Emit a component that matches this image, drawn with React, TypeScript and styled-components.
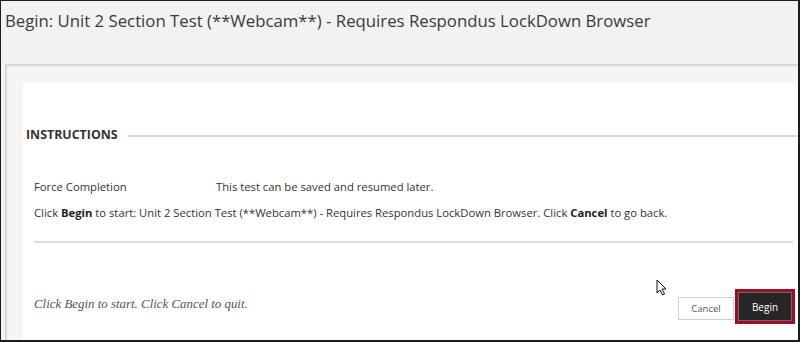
import React from "react";
import styled, { createGlobalStyle } from "styled-components";

const Global = createGlobalStyle`
  html, body { margin: 0; padding: 0; background: #f2f2f2; }
  * { box-sizing: border-box; }
`;

const Frame = styled.div`
  position: relative;
  width: 800px;
  height: 342px;
  border: 1px solid #1c1c1c;
  border-right-width: 2px;
  border-bottom-width: 2px;
  background: #f2f2f2;
  display: flex;
  flex-direction: column;
  font-family: "Open Sans", "Liberation Sans", sans-serif;
  color: #333;
  overflow: hidden;
`;

const Title = styled.h1`
  margin: 0;
  height: 63px;
  padding: 8px 0 0 4px;
  font-size: 16.75px;
  line-height: 24px;
  font-weight: 400;
  color: #3a3a3a;
  white-space: nowrap;
`;

const Panel = styled.div`
  flex: 1;
  display: flex;
  margin-left: 4px;
  border-top: 2px solid #d6d6d6;
  border-left: 2px solid #d6d6d6;
  background: #f5f5f5;
  padding: 17px 0 0 16px;
`;

const Content = styled.div`
  flex: 1;
  background: #fff;
  display: flex;
  flex-direction: column;
`;

const SectionHeader = styled.div`
  display: flex;
  align-items: center;
  gap: 10px;
  margin-top: 44px;
  padding-left: 3px;
`;

const SectionTitle = styled.h2`
  margin: 0;
  font-size: 12.4px;
  line-height: 16px;
  font-weight: 700;
  color: #333;
`;

const Rule = styled.div`
  flex: 1;
  height: 2px;
  background: #dadada;
  margin-top: 2px;
`;

const Body = styled.div`
  display: flex;
  flex-direction: column;
  padding-left: 11px;
  margin-top: 36px;
`;

const InfoRow = styled.div`
  display: flex;
  font-size: 11.25px;
  line-height: 16px;
  color: #333;
  white-space: nowrap;
`;

const Label = styled.span`
  width: 182px;
  flex: none;
`;

const Line = styled.p`
  margin: 10px 0 0;
  font-size: 11.25px;
  line-height: 16px;
  color: #333;
  white-space: nowrap;
  b { font-weight: 700; color: #222; }
`;

const Divider = styled.div`
  height: 2px;
  background: #dcdcdc;
  margin: 20px 5px 0 0;
`;

const Footer = styled.div`
  display: flex;
  align-items: center;
  justify-content: space-between;
  margin-top: 46px;
  padding-right: 3px;
`;

const Hint = styled.p`
  margin: 0 0 5px;
  font-family: "Liberation Serif", "DejaVu Serif", serif;
  font-style: italic;
  font-size: 12.9px;
  line-height: 16px;
  color: #555;
`;

const Buttons = styled.div`
  display: flex;
  align-items: center;
  gap: 1px;
`;

const Button = styled.button<{ $primary?: boolean }>`
  font-family: "Open Sans", "Liberation Sans", sans-serif;
  cursor: pointer;
  padding: 0;
  ${({ $primary }) =>
    $primary
      ? `
    width: 60px;
    height: 35px;
    background: #262626;
    color: #fff;
    border: 3px solid #a10b25;
    box-shadow: inset 0 0 0 1px #6a6a6a;
    font-size: 10px;
  `
      : `
    width: 56px;
    height: 23px;
    margin-top: 4px;
    background: #fff;
    color: #555;
    border: 1px solid #cfcfcf;
    font-size: 9.5px;
  `}
`;

const Cursor = styled.svg`
  position: absolute;
  left: 655px;
  top: 278px;
  width: 11px;
  height: 17px;
`;

export default function App() {
  return (
    <>
      <Global />
      <Frame>
        <Title>Begin: Unit 2 Section Test (**Webcam**) - Requires Respondus LockDown Browser</Title>
        <Panel>
          <Content>
            <SectionHeader>
              <SectionTitle>INSTRUCTIONS</SectionTitle>
              <Rule />
            </SectionHeader>
            <Body>
              <InfoRow>
                <Label>Force Completion</Label>
                <span>This test can be saved and resumed later.</span>
              </InfoRow>
              <Line>
                Click <b>Begin</b> to start: Unit 2 Section Test (**Webcam**) - Requires Respondus LockDown Browser. Click <b>Cancel</b> to go back.
              </Line>
              <Divider />
              <Footer>
                <Hint>Click Begin to start. Click Cancel to quit.</Hint>
                <Buttons>
                  <Button>Cancel</Button>
                  <Button $primary>Begin</Button>
                </Buttons>
              </Footer>
            </Body>
          </Content>
        </Panel>
        <Cursor viewBox="0 0 11 17">
          <path d="M1 1 L1 14 L4 11 L6.5 16 L8.5 15 L6 10 L10 10 Z" fill="#fff" stroke="#111" strokeWidth="1" strokeLinejoin="round" />
        </Cursor>
      </Frame>
    </>
  );
}
